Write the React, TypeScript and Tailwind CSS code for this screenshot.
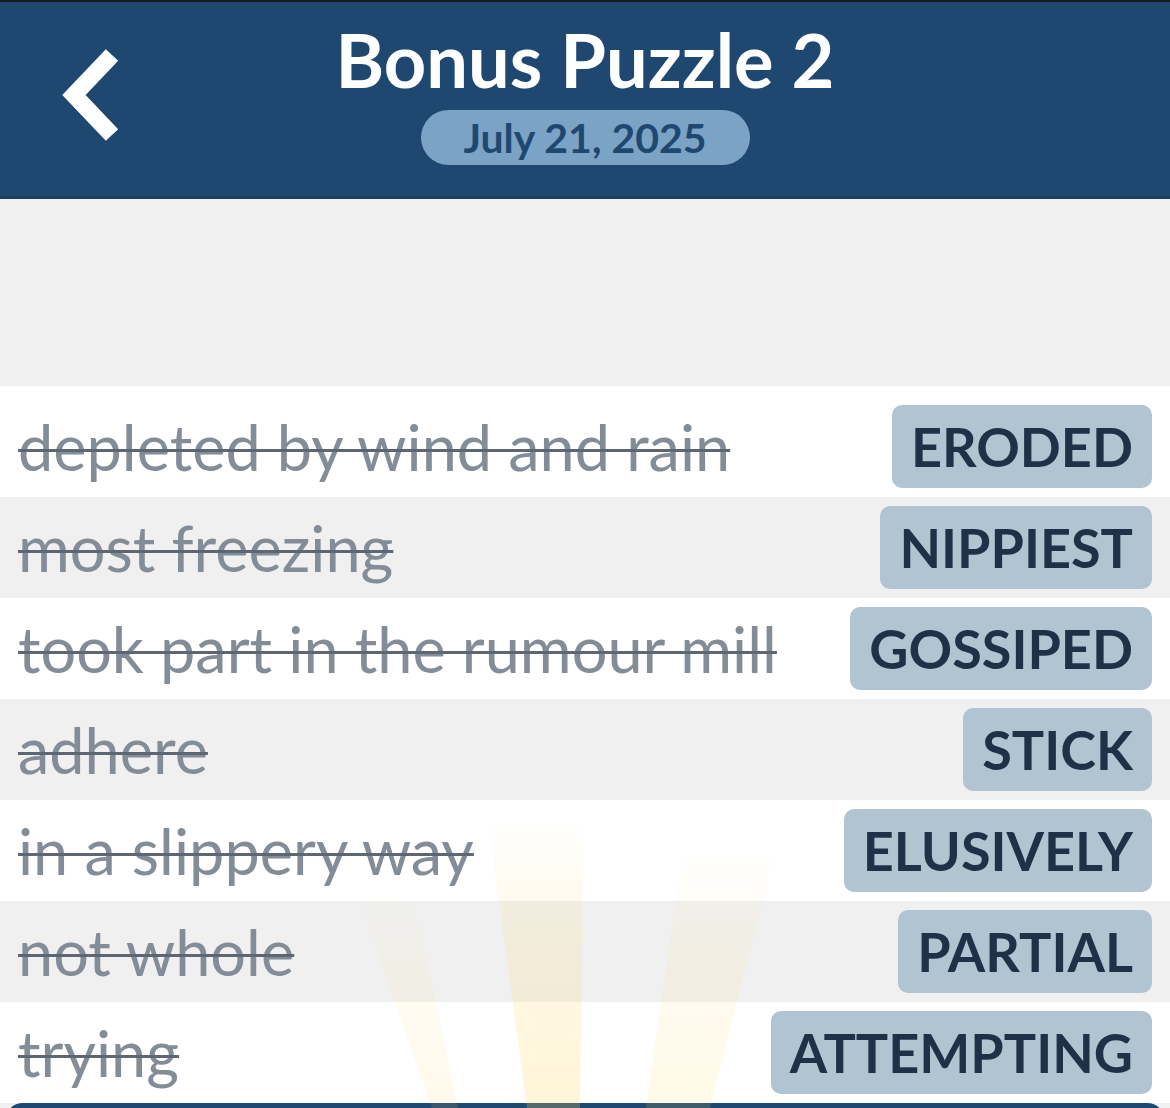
const rows = [
  { clue: 'depleted by wind and rain', answer: 'ERODED' },
  { clue: 'most freezing', answer: 'NIPPIEST' },
  { clue: 'took part in the rumour mill', answer: 'GOSSIPED' },
  { clue: 'adhere', answer: 'STICK' },
  { clue: 'in a slippery way', answer: 'ELUSIVELY' },
  { clue: 'not whole', answer: 'PARTIAL' },
  { clue: 'trying', answer: 'ATTEMPTING' },
];

function BackChevron() {
  return (
    <svg width="80" height="110" viewBox="0 0 80 110" className="absolute left-[50px] top-[38px]">
      <polyline points="62,15 24,55 62,95" fill="none" stroke="#ffffff" strokeWidth="17" strokeLinecap="butt" strokeLinejoin="miter" />
    </svg>
  );
}

function Rays() {
  return (
    <svg className="pointer-events-none absolute left-0 top-[780px]" width="1170" height="328" viewBox="0 0 1170 328">
      <defs>
        <linearGradient id="ray" x1="0" y1="0" x2="0" y2="1">
          <stop offset="0" stopColor="#ffd45a" stopOpacity="0" />
          <stop offset="0.35" stopColor="#ffd45a" stopOpacity="0.13" />
          <stop offset="1" stopColor="#ffd45a" stopOpacity="0.24" />
        </linearGradient>
      </defs>
      <polygon points="488,40 584,40 580,328 527,328" fill="url(#ray)" />
      <polygon points="683,70 776,70 710,328 646,328" fill="url(#ray)" opacity="0.6" />
      <polygon points="355,110 412,110 458,328 432,328" fill="url(#ray)" opacity="0.5" />
    </svg>
  );
}

export default function App() {
  return (
    <div className="relative h-[1108px] w-[1170px] overflow-hidden bg-[#f0f0f0] font-['Lato',sans-serif]">
      <header className="relative h-[199px] border-t-2 border-b-[3px] border-t-[#1b1b1b] border-b-[#1a3f63] bg-[#1f4870]">
        <BackChevron />
        <div className="flex flex-col items-center pt-[16px]">
          <h1 className="text-[74px] font-bold leading-[84px] text-white">Bonus Puzzle 2</h1>
          <div className="mt-[8px] flex h-[55px] w-[329px] items-center justify-center rounded-full bg-[#7aa3c6] text-[41px] font-bold text-[#1f4870]">
            July 21, 2025
          </div>
        </div>
      </header>

      <div className="h-[187px]" />

      <div className="flex flex-col">
        {rows.map((row, i) => (
          <div
            key={row.answer}
            className={`flex items-center justify-between pl-[18px] pr-[18px] ${i === 0 ? 'h-[111px] pt-[10px]' : 'h-[101px]'} ${i % 2 === 0 ? 'bg-white' : 'bg-[#f0f0f0]'}`}
          >
            <span className="text-[63px] leading-none text-[#838d98] line-through decoration-[#5d6773] decoration-[3px]">
              {row.clue}
            </span>
            <span className="flex h-[83px] items-center rounded-[10px] bg-[#b0c4d2] px-[19px] text-[54px] font-bold text-[#1e3247]">
              {row.answer}
            </span>
          </div>
        ))}
      </div>

      <div className="mx-[5px] h-[40px] rounded-t-[18px] bg-[#1f4870]" />

      <Rays />
    </div>
  );
}
